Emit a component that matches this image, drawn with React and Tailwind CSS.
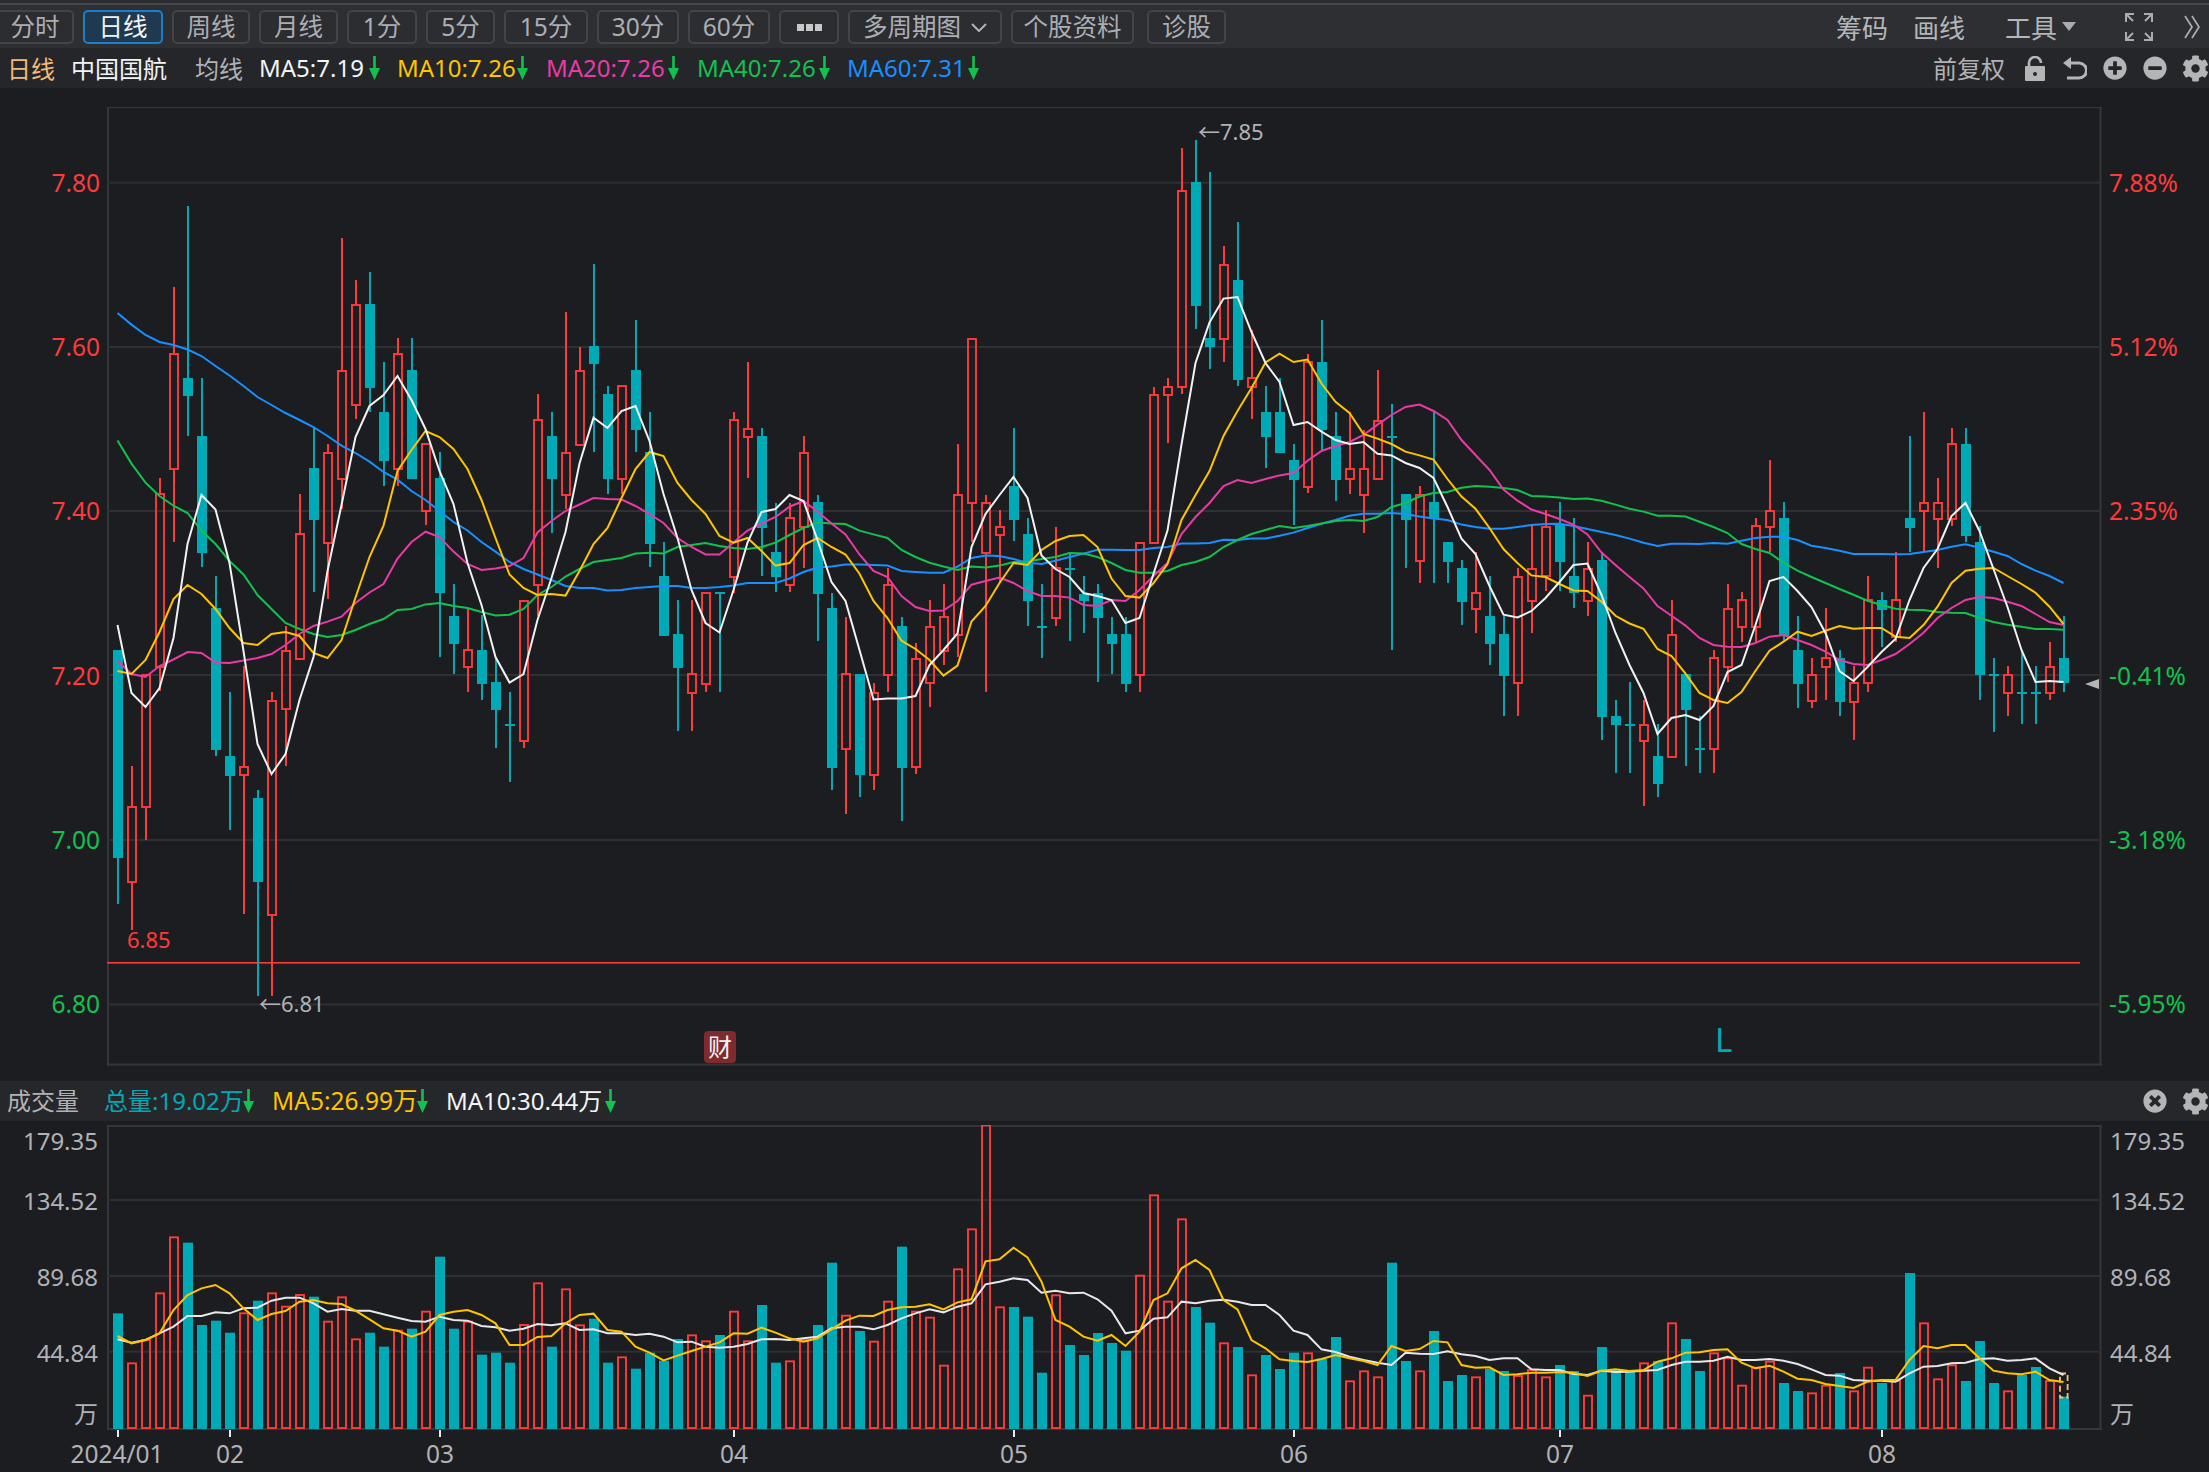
import React from "react";
import { FaCog, FaPlusCircle, FaMinusCircle, FaTimesCircle } from "react-icons/fa";

const C = [
[650,650,858,904,0],[766,807,882,930,1],[675,675,807,840,1],[478,494,667,691,1],[287,354,469,542,1],
[206,378,396,436,0],[378,436,553,567,0],[576,608,750,756,0],[692,756,776,830,0],[666,767,775,914,1],
[790,798,882,996,0],[692,701,915,996,1],[626,651,709,766,1],[494,534,659,659,1],[428,468,520,592,0],
[444,453,543,599,1],[238,371,479,509,1],[280,305,405,419,1],[272,304,388,412,0],[362,412,461,486,0],
[338,354,469,486,1],[338,370,479,479,0],[444,444,511,525,1],[452,478,593,657,0],[584,616,644,674,0],
[609,650,667,692,1],[615,650,684,700,0],[659,682,710,748,0],[692,725,725,782,0],[600,601,741,748,1],
[394,420,585,616,1],[412,436,479,533,0],[312,453,495,509,1],[347,371,445,445,1],[264,346,364,452,0],
[386,394,479,494,0],[386,386,479,494,1],[320,370,430,452,0],[412,452,544,567,0],[542,576,636,636,0],
[600,634,668,731,0],[600,674,693,731,1],[593,593,684,692,1],[593,593,593,692,0],[412,420,577,593,1],
[362,429,437,478,1],[428,436,528,576,0],[503,552,577,592,0],[503,518,585,592,1],[436,453,527,568,1],
[495,502,594,641,0],[593,608,768,790,0],[617,674,749,814,1],[674,674,775,797,0],[683,693,775,790,1],
[568,585,675,692,1],[617,626,768,821,0],[643,659,767,774,1],[600,627,683,707,1],[584,617,651,665,1],
[444,495,635,657,1],[339,339,503,542,1],[495,503,553,692,1],[510,527,535,583,1],[428,486,520,541,0],
[518,534,601,626,0],[584,627,627,658,0],[527,568,618,626,1],[554,569,569,641,0],[576,594,601,633,0],
[584,593,618,682,0],[617,634,644,674,0],[617,634,684,692,0],[543,543,675,692,1],[387,395,543,543,1],
[378,387,395,443,1],[148,191,387,394,1],[140,182,306,329,0],[172,338,347,369,0],[246,265,339,362,1],
[222,280,380,386,0],[330,378,387,419,1],[386,412,437,468,0],[378,412,453,453,0],[444,460,480,525,0],
[354,362,487,493,1],[320,362,430,451,0],[412,436,480,501,0],[412,469,479,494,1],[430,469,495,533,1],
[370,421,479,479,1],[404,437,437,650,0],[494,494,520,568,0],[486,495,561,583,1],[412,502,519,583,0],
[542,542,562,583,0],[560,568,602,625,0],[552,593,609,633,1],[576,616,644,665,0],[616,634,676,716,0],
[568,577,683,716,1],[526,569,601,633,1],[510,527,576,591,1],[502,525,562,591,0],[518,576,593,608,0],
[542,569,601,616,1],[552,560,717,740,0],[700,716,725,773,0],[682,725,725,773,0],[700,725,741,806,1],
[724,756,784,797,0],[600,635,757,757,1],[674,674,710,766,0],[716,749,749,773,0],[650,658,749,773,1],
[584,609,667,682,1],[592,600,627,642,1],[518,526,627,642,1],[460,511,527,552,1],[502,518,636,642,0],
[616,650,684,708,0],[658,675,701,708,1],[608,658,667,700,1],[650,658,702,716,0],[666,683,702,740,1],
[576,600,683,692,1],[592,600,610,647,0],[552,600,637,642,1],[436,518,528,552,0],[412,503,511,552,1],
[478,503,519,568,1],[428,444,519,526,1],[428,444,536,542,0],[526,542,675,700,0],[658,675,675,732,0],
[666,675,693,716,1],[650,693,693,724,0],[666,693,693,724,0],[642,667,693,700,1],[616,658,683,692,0],
];

const MA5 = [625,693,707,688,638,544,495,509.5,563,651,744,774,754,700,657,571,505,437,406,395,376,400,429,471,504,563,605,657,682.5,674,620,578,532,463.5,417.6,428,411,406,441,494,538,590,623,632.5,590,542.6,512,509,495,501,540,582,601,650,699.5,698.6,698.6,696,665,650,633.5,547,514,495,477,498,555.5,569,577,593,596,600,623,618,573.7,530.6,444.5,363,322.5,298.6,297,332,363,382,425,422,431.6,440,444,442,453.7,455.4,463,468,478,507,538.6,554,586,614.7,617.5,611,598,582,565,563.5,595,633,665,693,734,718,715,720,706,672,665,625,581,577,591,607,633,671,681,667,652,639,600,568,549,516,503,531,569,607,650,682,681,682];
const MA10 = [671,674,660,632,599,585,594,609,628,643,645,634,632,636,653,658,640,597.5,557,525.6,471,450,431,437,449,469,500,538,574.5,588,595,594,595.6,571,544,528,498,469,452,456,483,500,514,536,542.6,538,551,565.6,563,545,538,547,554.5,573.7,601,618,640.7,649,660,675.6,665.6,621.5,606,583,563,565,550,541,536,535,547,578.5,596,597.6,583,564,520,495,471,436,411,388,362.5,353.7,362,359.6,383.5,401.8,413,434,438.6,444,451.6,455.4,459.6,479,496.5,508.8,528,549,563,575.4,577,584,590.5,591,601.7,615.8,623.5,628.8,649,656,673.7,693,700,703,692,670.7,650.7,641.7,631.7,636,630.7,626,628.7,628,628,636.7,638,625,606.7,583,570.7,568.7,568,576,584,592.7,606.7,624];
const MA20 = [661,674,677,666,659.5,652,653,662.6,663,660.6,658,654,645,634,626,621.6,616.6,603,592.5,584,558.5,542,531.7,537,551.6,564,570,568.4,566,558,532.5,521,511,504.5,498,499,499.5,506,514,523,538,547,554.5,554.5,542.6,530.6,523.5,517,506.7,501,511.5,523.5,534.4,554.5,571,577,596,607,611,610.5,601,584.7,581,577.5,583,591,596,596,597.6,605,606,600,601,590,576,563,534,517,503,486,480,483,479,475.4,473,460.7,451,446,442,435,424.6,415,407,404.6,411,420,440,455,470,489.5,500.7,509.5,514,519,524.6,534.4,552.6,565,577,588.4,606,615.8,625.6,638,645,646.7,647,643,636.7,635,640,645,651.7,660,664,665,660,654,644,632.7,618,608,600,597,598,601.7,606,614,622,625];
const MA40 = [440.6,463.6,482.7,496,505.7,513,530.5,544,561,574.5,595,609,623,629,634,637,635,630,624,619,610,609,604.4,603,606,608,612,615.5,614.7,609,595,587,576.5,569,562,560,558,553.5,552.7,553.5,547,545,543,546,548,549,547,542.6,535,528,522.5,523.5,524,530.6,534.4,538,550,557,562.7,566.5,570,566.5,567.5,565.6,562,561.7,559,557,553,553.6,557,563,570,572.7,572.7,571,565,562,557,547,540,534,530,526,528,526,523.5,521,520,521,517,507,503,496.5,493,492,487.7,486,486.7,488,490,496,496.5,497.5,499,498.6,500.7,504.6,508.8,511.6,515.8,515.8,516.5,521.8,527,533,544,549,553,562.7,570.7,577,583,589,594.7,600.7,605,608.7,609.7,610,612,612.7,613,618,622,624.7,626.7,629,629,629.7];
const MA60 = [313,324.6,335,342,345,349.5,356,366,375.5,386,397,405,413,420,427,436,445.6,453,461.6,472,479.6,491,500,511,522,530.5,542,551.6,562,569,574.5,580,586,588,588,590.6,590,588,587,586,586,588,588,587,585.6,583,583,583,578.5,572,567.5,566.5,564.6,564.6,565,565.6,571,572,572.7,572.7,566.5,558,555.5,556,559,562.7,564,560.8,557,553.6,549.8,549.8,550,550,548,547,543.5,543.5,543,539.7,540,538.6,538.6,535.8,532.6,528,523.8,520,515.8,513.7,513.7,513,514,516.5,518.6,520,524.6,527,528.8,528.8,527,525,524,523.8,526,529,532,535,538.6,542.8,546,543.8,543.8,544,543,543.7,540.7,538,536.7,536.7,540,545.7,548,550.7,554,554,554,554.3,554,552,550,546.7,544.3,547.7,551.7,556,564,570.7,576,583];

const VOL = [790,940,870,730,562,578,825,812,848,790,752,730,770,735,740,815,742,868,848,890,842,836,785,620,836,815,914,908,938,825,700,890,718,826,806,938,922,956,908,932,867,856,874,855,785,874,765,938,934,870,825,638,797,843,875,755,590,785,803,947,658,538,226,772,771,800,968,736,885,915,849,879,902,677,436,755,508,771,818,880,891,976,915,957,908,910,926,861,994,964,982,638,933,964,843,993,975,982,957,963,978,960,982,945,963,1037,891,958,963,940,933,820,867,963,910,925,1007,953,935,999,1023,1030,1007,969,1024,953,999,993,669,820,988,946,993,873,999,1024,975,951,993,1040];
const VY = [858,880,870,850,780,735,715,705,730,775,810,792,783,755,750,760,762,782,808,835,842,860,845,795,785,780,795,820,885,885,861,858,820,795,791,840,845,890,908,931,917,903,890,877,850,851,833,848,865,875,865,838,812,797,798,780,772,770,763,778,757,748,634,628,593,622,695,810,830,860,872,855,888,845,750,730,655,630,660,750,778,870,895,928,933,936,927,915,925,933,945,888,903,897,873,877,945,953,952,975,973,968,968,966,968,978,962,958,963,960,935,925,908,907,900,898,938,955,947,965,986,990,1002,1008,1014,995,990,990,930,888,895,885,885,925,962,970,973,965,990,996];
const VW = [868,878,870,850,830,798,798,787,790,775,773,752,743,743,760,785,777,782,782,793,803,813,815,800,810,812,828,832,842,836,822,826,820,840,838,850,850,855,851,860,877,875,890,893,890,882,868,867,870,865,860,835,830,830,838,825,805,790,778,787,770,760,703,695,685,690,728,722,730,728,748,782,850,842,806,802,755,760,752,749,755,765,765,795,842,855,898,906,920,930,938,945,908,911,912,904,913,918,930,925,925,958,960,960,972,975,962,966,965,962,960,945,935,935,932,920,930,930,927,932,942,958,975,977,990,992,992,995,970,950,948,940,938,927,925,932,930,925,955,975];

const RED = "#ff3a3a";
const TEAL = "#00a9b6";
const cx = (i) => 118 + 14 * i;
const vy = (v) => 1050 + v / 3;
const pts = (a) => a.map((y, i) => `${117.5 + 14 * i},${y}`).join(" ");
const vpts = (a) => a.map((v, i) => `${117.5 + 14 * i},${vy(v)}`).join(" ");

function DownArrow({ className = "" }) {
  return (
    <svg width="11" height="24" viewBox="0 0 11 24" className={"shrink-0 " + className}>
      <rect x="4.2" y="0" width="2.6" height="13" fill="#13c14f" />
      <polygon points="0,12 11,12 5.5,24" fill="#13c14f" />
    </svg>
  );
}

function Btn({ w, active, children }) {
  return (
    <div
      className={
        "flex items-center justify-center h-[34px] pt-[1px] rounded-[5px] border-2 shrink-0 " +
        w +
        " " +
        (active
          ? "border-[#1b7fcc] bg-[#1f3a50] text-[#f2f4f6]"
          : "border-[#424448] bg-[#2b2d31] text-[#acaeb1]")
      }
    >
      {children}
    </div>
  );
}

function Lock() {
  return (
    <svg width="20" height="25" viewBox="0 0 20 25" className="shrink-0">
      <path d="M4 11V7a6 6 0 0 1 12 0" fill="none" stroke="#b4b5b7" strokeWidth="2.6" />
      <path fillRule="evenodd" d="M1 10h18a1 1 0 0 1 1 1v13a1 1 0 0 1-1 1H1a1 1 0 0 1-1-1V11a1 1 0 0 1 1-1zm9 6a2 2 0 1 0 0 4a2 2 0 0 0 0-4z" fill="#b4b5b7" />
    </svg>
  );
}

function Undo() {
  return (
    <svg width="24" height="24" viewBox="0 0 24 24" className="shrink-0">
      <path d="M3 7h13a6.5 6.5 0 0 1 0 15H4" fill="none" stroke="#b4b5b7" strokeWidth="3" />
      <polygon points="0,7 8,1 8,13" fill="#b4b5b7" />
    </svg>
  );
}

function Expand() {
  const s = { stroke: "#a9abae", strokeWidth: 2, fill: "none" };
  return (
    <svg width="28" height="28" viewBox="0 0 28 28" className="shrink-0">
      <path d="M1 9V1H9M1 1L8 8" {...s} />
      <path d="M19 1H27V9M27 1L20 8" {...s} />
      <path d="M1 19V27H9M1 27L8 20" {...s} />
      <path d="M27 19V27H19M27 27L20 20" {...s} />
    </svg>
  );
}

function Grid({ ys, x2 = 2101 }) {
  return ys.map((y) => <rect key={y} x="107" y={y - 1} width={x2 - 107} height="2" fill="#2f3034" />);
}

function PriceChart() {
  return (
    <svg viewBox="107 107 1995 959" width="1995" height="959" className="block">
      <rect x="107" y="106" width="1995" height="2" fill="#35363a" />
      <rect x="107" y="1063.5" width="1995" height="2" fill="#35363a" />
      <rect x="107" y="107" width="2" height="959" fill="#35363a" />
      <rect x="2099.5" y="107" width="2" height="959" fill="#35363a" />
      <Grid ys={[182.7, 347, 511, 675, 840, 1004.5]} />
      <rect x="107" y="962" width="1973" height="1.6" fill={RED} />
      {C.map(([wt, bt, bb, wb, up], i) => {
        const x = cx(i);
        const col = up ? RED : TEAL;
        if (bt === bb) {
          return (
            <g key={i} fill={col}>
              <rect x={x - 1} y={wt} width="2" height={wb - wt} />
              <rect x={x - 5} y={bt - 1} width="10" height="2" />
            </g>
          );
        }
        return (
          <g key={i}>
            <rect x={x - 1} y={wt} width="2" height={Math.max(bt - wt, 0)} fill={col} />
            <rect x={x - 1} y={bb} width="2" height={Math.max(wb - bb, 0)} fill={col} />
            {up ? (
              <rect x={x - 4} y={bt} width="8" height={bb - bt} fill="none" stroke={col} strokeWidth="1.9" />
            ) : (
              <rect x={x - 5} y={bt} width="10" height={bb - bt} fill={col} />
            )}
          </g>
        );
      })}
      <polyline points={pts(MA60)} fill="none" stroke="#1890ff" strokeWidth="2" />
      <polyline points={pts(MA40)} fill="none" stroke="#13c14f" strokeWidth="2" />
      <polyline points={pts(MA20)} fill="none" stroke="#e93aa5" strokeWidth="2" />
      <polyline points={pts(MA10)} fill="none" stroke="#ffc400" strokeWidth="2" />
      <polyline points={pts(MA5)} fill="none" stroke="#f2f2f2" strokeWidth="2" />
      <polygon points="2085,684 2099,679 2099,689" fill="#b5b5b5" />
    </svg>
  );
}

function VolChart() {
  return (
    <svg viewBox="107 1125 1995 305" width="1995" height="305" className="block">
      <rect x="107" y="1125" width="1995" height="2" fill="#35363a" />
      <rect x="107" y="1125" width="2" height="305" fill="#35363a" />
      <rect x="2099.5" y="1125" width="2" height="305" fill="#35363a" />
      <rect x="107" y="1428" width="1995" height="2" fill="#35363a" />
      <Grid ys={[1200, 1276, 1351.7]} />
      {VOL.map((v, i) => {
        const x = cx(i);
        const y = vy(v);
        const up = C[i][4];
        const base = 1429;
        return up ? (
          <rect key={i} x={x - 4} y={y} width="8" height={base - y - 1} fill="none" stroke={RED} strokeWidth="1.9" />
        ) : (
          <rect key={i} x={x - 5} y={y} width="10" height={base - y} fill={TEAL} />
        );
      })}
      <rect x="2060" y="1373.5" width="7.6" height="24" fill="none" stroke="#f5c07a" strokeWidth="1.8" strokeDasharray="6 3" />
      <polyline points={vpts(VW)} fill="none" stroke="#e8e8e8" strokeWidth="2" />
      <polyline points={vpts(VY)} fill="none" stroke="#ffc400" strokeWidth="2" />
    </svg>
  );
}

const TICKS = [
  ["2024/01", 0, "left-[70px] w-[94px]"],
  ["02", 8, "left-[210px] w-[40px]"],
  ["03", 23, "left-[420px] w-[40px]"],
  ["04", 44, "left-[714px] w-[40px]"],
  ["05", 64, "left-[994px] w-[40px]"],
  ["06", 84, "left-[1274px] w-[40px]"],
  ["07", 103, "left-[1540px] w-[40px]"],
  ["08", 126, "left-[1862px] w-[40px]"],
];

export default function App() {
  return (
    <div className="w-[2209px] h-[1472px] overflow-hidden bg-[#1c1d21] flex flex-col font-['Noto_Sans','Noto_Sans_CJK_SC',sans-serif] text-[24px] text-[#b0b2b5]">
      {/* toolbar */}
      <div className="h-[48px] shrink-0 bg-[#2d2f33] flex flex-col">
        <div className="h-[3px] shrink-0 bg-[#2a2b2f]" />
        <div className="h-[2px] shrink-0 bg-[#46484c]" />
        <div className="flex-1 flex items-center justify-between">
          <div className="flex items-center gap-[9px] ml-[-4px] leading-none text-[24.5px]">
            <Btn w="w-[78px]">分时</Btn>
            <Btn w="w-[80px]" active>日线</Btn>
            <Btn w="w-[78px]">周线</Btn>
            <Btn w="w-[79px]">月线</Btn>
            <Btn w="w-[70px]">1分</Btn>
            <Btn w="w-[69px]">5分</Btn>
            <Btn w="w-[84px]">15分</Btn>
            <Btn w="w-[82px]">30分</Btn>
            <Btn w="w-[82px]">60分</Btn>
            <Btn w="w-[60px]">
              <span className="flex gap-[2px]">
                <span className="w-[7px] h-[7px] bg-[#c6c7c9]" />
                <span className="w-[7px] h-[7px] bg-[#c6c7c9]" />
                <span className="w-[7px] h-[7px] bg-[#c6c7c9]" />
              </span>
            </Btn>
            <Btn w="w-[154px]">
              多周期图
              <svg width="16" height="9" viewBox="0 0 16 9" className="ml-[10px]">
                <path d="M1 1L8 8L15 1" fill="none" stroke="#b0b2b5" strokeWidth="2" />
              </svg>
            </Btn>
            <Btn w="w-[123px]">个股资料</Btn>
            <div className="ml-[4px]">
              <Btn w="w-[79px]">诊股</Btn>
            </div>
          </div>
          <div className="flex items-center mr-[9px] leading-none text-[26px] text-[#b4b6b8]">
            <span className="pt-[2px]">筹码</span>
            <span className="pt-[2px] ml-[25px]">画线</span>
            <span className="pt-[2px] ml-[40px]">工具</span>
            <svg width="14" height="9" viewBox="0 0 14 9" className="ml-[5px]">
              <polygon points="0,0 14,0 7,9" fill="#a9abae" />
            </svg>
            <div className="ml-[49px]">
              <Expand />
            </div>
            <svg width="16" height="24" viewBox="0 0 16 24" className="ml-[31px]">
              <path d="M1 1L8 12L1 23M8 1L15 12L8 23" fill="none" stroke="#a9abae" strokeWidth="1.8" />
            </svg>
          </div>
        </div>
      </div>

      {/* legend */}
      <div className="h-[40px] shrink-0 bg-[#24262a] flex items-center justify-between">
        <div className="flex items-center pl-[7px] leading-none">
          <span className="pt-[1px] text-[#f5b977] w-[64px]">日线</span>
          <span className="pt-[1px] text-[#f2f4f6] w-[124px]">中国国航</span>
          <span className="pt-[1px] w-[64px]">均线</span>
          <span className="text-[#f2f4f6] w-[110px]">MA5:7.19</span>
          <DownArrow />
          <span className="text-[#ffc400] ml-[17px] w-[120px]">MA10:7.26</span>
          <DownArrow />
          <span className="text-[#e93aa5] ml-[18px] w-[122px]">MA20:7.26</span>
          <DownArrow />
          <span className="text-[#13c14f] ml-[18px] w-[122px]">MA40:7.26</span>
          <DownArrow />
          <span className="text-[#1890ff] ml-[17px] w-[121px]">MA60:7.31</span>
          <DownArrow />
        </div>
        <div className="flex items-center leading-none">
          <span className="pt-[1px] mr-[20px]">前复权</span>
          <Lock />
          <div className="ml-[18px]"><Undo /></div>
          <FaPlusCircle className="ml-[16px] w-[24px] h-[24px] text-[#b4b5b7]" />
          <FaMinusCircle className="ml-[16px] w-[24px] h-[24px] text-[#b4b5b7]" />
          <FaCog className="ml-[15px] w-[27px] h-[27px] text-[#b4b5b7]" />
        </div>
      </div>

      {/* price chart */}
      <div className="h-[959px] shrink-0 mt-[19px] flex leading-none text-[24.5px]">
        <div className="w-[107px] shrink-0 pr-[7px] pt-[63.7px] flex flex-col items-end gap-[140.3px]">
          {[["7.80", 1], ["7.60", 1], ["7.40", 1], ["7.20", 1], ["7.00", 0], ["6.80", 0]].map(([t, r]) => (
            <span key={t} className={"h-[24px] leading-[24px] " + (r ? "text-[#ff3a3a]" : "text-[#13c14f]")}>{t}</span>
          ))}
        </div>
        <div className="relative w-[1995px] shrink-0">
          <PriceChart />
          <span className="absolute left-[1091px] top-[12px] text-[22px] leading-[24px] whitespace-nowrap">←7.85</span>
          <span className="absolute left-[20px] top-[820px] text-[22px] leading-[24px] text-[#ff3a3a]">6.85</span>
          <span className="absolute left-[152px] top-[884px] text-[22px] leading-[24px] whitespace-nowrap">←6.81</span>
          <span className="absolute left-[597px] top-[924px] w-[32px] h-[32px] rounded-[4px] bg-[#7e2a2e] text-[#f2f2f2] flex items-center justify-center text-[24px]">财</span>
          <span className="absolute left-[1608px] top-[917px] text-[33px] leading-[32px] text-[#00a9b6]">L</span>
        </div>
        <div className="pl-[7px] pt-[63.7px] flex flex-col items-start gap-[140.3px]">
          {[["7.88%", 1], ["5.12%", 1], ["2.35%", 1], ["-0.41%", 0], ["-3.18%", 0], ["-5.95%", 0]].map(([t, r]) => (
            <span key={t} className={"h-[24px] leading-[24px] " + (r ? "text-[#ff3a3a]" : "text-[#13c14f]")}>{t}</span>
          ))}
        </div>
      </div>

      {/* volume header */}
      <div className="h-[40px] shrink-0 mt-[15px] bg-[#25272b] flex items-center justify-between leading-none">
        <div className="flex items-center pl-[7px]">
          <span className="w-[97px]">成交量</span>
          <span className="text-[#00a9b6] w-[139px] whitespace-nowrap">总量:19.02万</span>
          <DownArrow />
          <span className="text-[#ffc400] ml-[18px] w-[145px] whitespace-nowrap text-[24.5px]">MA5:26.99万</span>
          <DownArrow />
          <span className="text-[#f2f4f6] ml-[18px] w-[159px] whitespace-nowrap">MA10:30.44万</span>
          <DownArrow />
        </div>
        <div className="flex items-center">
          <FaTimesCircle className="w-[24px] h-[24px] text-[#b4b5b7]" />
          <FaCog className="ml-[15px] w-[27px] h-[27px] text-[#b4b5b7]" />
        </div>
      </div>

      {/* volume chart */}
      <div className="h-[305px] shrink-0 mt-[4px] flex leading-none">
        <div className="w-[107px] shrink-0 pr-[9px] flex flex-col items-end">
          <span className="h-[24px] leading-[24px] mt-[4px]">179.35</span>
          <span className="h-[24px] leading-[24px] mt-[36px]">134.52</span>
          <span className="h-[24px] leading-[24px] mt-[52px]">89.68</span>
          <span className="h-[24px] leading-[24px] mt-[52px]">44.84</span>
          <span className="h-[24px] leading-[24px] mt-[37px]">万</span>
        </div>
        <div className="w-[1995px] shrink-0">
          <VolChart />
        </div>
        <div className="pl-[8px] flex flex-col items-start">
          <span className="h-[24px] leading-[24px] mt-[4px]">179.35</span>
          <span className="h-[24px] leading-[24px] mt-[36px]">134.52</span>
          <span className="h-[24px] leading-[24px] mt-[52px]">89.68</span>
          <span className="h-[24px] leading-[24px] mt-[52px]">44.84</span>
          <span className="h-[24px] leading-[24px] mt-[37px]">万</span>
        </div>
      </div>

      {/* date axis */}
      <div className="relative flex-1 leading-none text-[24.5px]">
        {TICKS.map(([t, i, pos]) => (
          <React.Fragment key={t}>
            <span className={"absolute top-[12px] text-center " + pos}>{t}</span>
            <span className="absolute top-0 w-[2px] h-[7px] bg-[#e8e8e8]" style={{ left: cx(i) - 1 }} />
          </React.Fragment>
        ))}
      </div>
    </div>
  );
}
